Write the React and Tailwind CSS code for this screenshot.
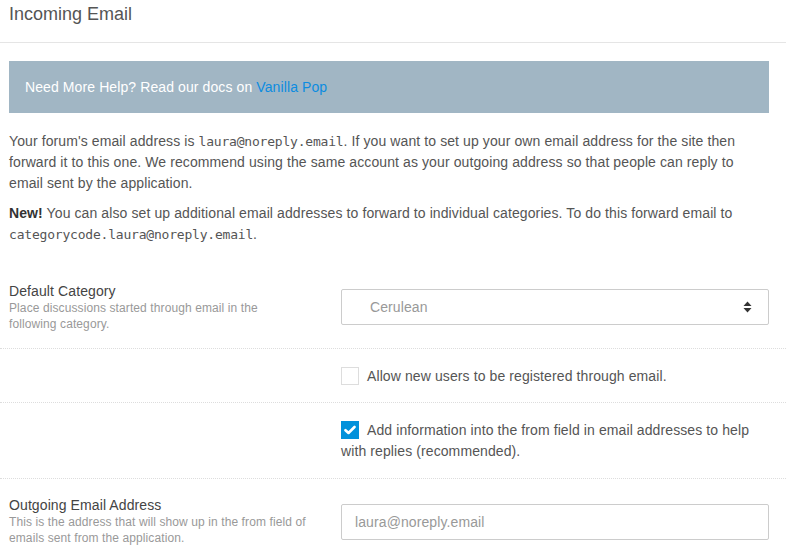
import React from "react";

export default function App() {
  const mono = { fontFamily: '"DejaVu Sans Mono", monospace' };
  return (
    <div className="w-[786px] h-[556px] overflow-hidden bg-white text-[#555] tracking-[0.1px] font-['Liberation_Sans',Arial,sans-serif]">
      <div className="h-[43px] border-b border-[#e5e5e5] pl-[9px] pt-[2px]">
        <h1 className="text-[18px] leading-[24px] tracking-normal text-[#555]">Incoming Email</h1>
      </div>
      <div className="pl-[9px] pr-[17px]">
        <div className="mt-[18px] h-[52px] bg-[#a1b6c4] pl-[16px] flex items-center text-[14px] text-white">
          <span>
            Need More Help? Read our docs on <a className="text-[#0c8ce0]">Vanilla Pop</a>
          </span>
        </div>
        <div className="mt-[18px] text-[14px] leading-[21px] text-[#555]">
          <p>
            Your forum's email address is <code style={mono} className="text-[13px] tracking-[-0.2px] text-[#555]">laura@noreply.email</code>. If you want to set up your own email address for the site then forward it to this one. We recommend using the same account as your outgoing address so that people can reply to email sent by the application.
          </p>
          <p className="mt-[9px]">
            <b className="text-[#333]">New!</b> You can also set up additional email addresses to forward to individual categories. To do this forward email to <code style={mono} className="text-[13px] tracking-[-0.2px] text-[#555]">categorycode.laura@noreply.email</code>.
          </p>
        </div>
      </div>
      <div className="mt-[37px]">
        <div className="flex pl-[9px] pr-[17px] pb-[16px] border-b border-dotted border-[#ddd]">
          <div className="w-[298px] shrink-0">
            <div className="text-[14px] leading-[18px] text-[#444]">Default Category</div>
            <div className="text-[12px] leading-[16px] text-[#999]">Place discussions started through email in the following category.</div>
          </div>
          <div className="ml-[34px] flex-1">
            <div className="mt-[7px] h-[36px] border border-[#ccc] rounded-[2px] flex items-center pl-[28px] pr-[16px] justify-between">
              <span className="text-[14px] text-[#999]">Cerulean</span>
              <svg width="9" height="12" viewBox="0 0 9 12">
                <path d="M4.5 0.5 L8.5 5 L0.5 5 Z" fill="#333" />
                <path d="M4.5 11.5 L8.5 7 L0.5 7 Z" fill="#333" />
              </svg>
            </div>
          </div>
        </div>
        <div className="flex pl-[9px] pr-[17px] pt-[17px] pb-[15px] border-b border-dotted border-[#ddd]">
          <div className="w-[298px] shrink-0"></div>
          <div className="ml-[34px] flex-1 text-[14px] leading-[21px] text-[#555]">
            <span className="inline-block align-[-4px] w-[18px] h-[18px] border border-[#ddd] bg-white mr-[8px]"></span>
            Allow new users to be registered through email.
          </div>
        </div>
        <div className="flex pl-[9px] pr-[17px] pt-[17px] pb-[16px] border-b border-dotted border-[#ddd]">
          <div className="w-[298px] shrink-0"></div>
          <div className="ml-[34px] flex-1 text-[14px] leading-[21px] text-[#555]">
            <span className="relative inline-block align-[-4px] w-[18px] h-[18px] bg-[#0291db] mr-[8px]">
              <svg className="absolute left-[3px] top-[4px]" width="12" height="10" viewBox="0 0 12 10">
                <path d="M1.5 5.2 L4.5 8 L10.5 2" stroke="white" strokeWidth="2.6" fill="none" strokeLinecap="round" strokeLinejoin="round" />
              </svg>
            </span>
            Add information into the from field in email addresses to help with replies (recommended).
          </div>
        </div>
        <div className="flex pl-[9px] pr-[17px] pt-[17px]">
          <div className="w-[298px] shrink-0">
            <div className="text-[14px] leading-[18px] text-[#444]">Outgoing Email Address</div>
            <div className="text-[12px] leading-[16px] text-[#999]">This is the address that will show up in the from field of emails sent from the application.</div>
          </div>
          <div className="ml-[34px] flex-1">
            <div className="mt-[8px] h-[36px] border border-[#ccc] rounded-[2px] flex items-center pl-[13px]">
              <span className="text-[14px] text-[#999]">laura@noreply.email</span>
            </div>
          </div>
        </div>
      </div>
    </div>
  );
}
